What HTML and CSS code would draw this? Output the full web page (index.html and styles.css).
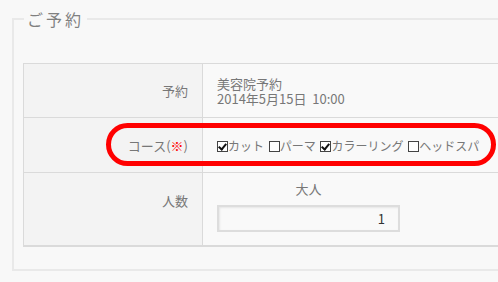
FILE: index.html
```html
<!DOCTYPE html>
<html lang="ja">
<head>
    <meta charset="UTF-8">
    <title>ご予約</title>
    <link rel="stylesheet" href="styles.css">
</head>
<body>
    <fieldset class="reserve">
        <legend>ご予約</legend>
        <div class="table-wrap">
            <table class="form-table">
                <colgroup>
                    <col class="col-label">
                    <col>
                </colgroup>
                <tr class="row-reserve">
                    <th>予約</th>
                    <td>
                        <div>美容院予約</div>
                        <div>2014年5月15日&nbsp;&nbsp;10:00</div>
                    </td>
                </tr>
                <tr class="row-course">
                    <th>コース(<span class="req">※</span>)</th>
                    <td>
                        <span class="opt"><span class="box checked"></span>カット</span>
                        <span class="opt"><span class="box"></span>パーマ</span>
                        <span class="opt"><span class="box checked"></span>カラーリング</span>
                        <span class="opt"><span class="box"></span>ヘッドスパ</span>
                    </td>
                </tr>
                <tr class="row-people">
                    <th>人数</th>
                    <td>
                        <div class="people">
                            <div class="people-label">大人</div>
                            <input type="text" class="people-input" value="1">
                        </div>
                    </td>
                </tr>
            </table>
            <div class="mark"></div>
        </div>
    </fieldset>
</body>
</html>
```

FILE: styles.css
```css
body {
    margin: 0;
    background-color: #f8f8f8;
    font-family: "Noto Sans CJK JP", "Noto Sans", sans-serif;
    color: #777;
}
.reserve {
    margin: 9px 0 0 12px;
    padding: 34px 0 22px 9px;
    border: 2px solid #e9e9e9;
    border-right: none;
}
.reserve legend {
    margin-left: 1px;
    padding: 0 3px;
    font-size: 16px;
    line-height: 20px;
    color: #808080;
    letter-spacing: 3px;
}
.table-wrap {
    position: relative;
}
.form-table {
    border-collapse: collapse;
    table-layout: fixed;
    width: 100%;
    font-size: 13px;
    line-height: 15px;
}
.col-label {
    width: 179px;
}
.form-table th,
.form-table td {
    border: 1px solid #dadada;
    padding: 0;
}
.form-table td {
    border-right: none;
}
.form-table tr:last-child th,
.form-table tr:last-child td {
    border-bottom-width: 2px;
}
.form-table th {
    padding-right: 14px;
    text-align: right;
    font-weight: normal;
    background-color: #f3f3f3;
    vertical-align: middle;
}
.form-table td {
    padding-left: 14px;
    background-color: #f9f9f9;
    vertical-align: middle;
}
.row-reserve {
    height: 54px;
}
.row-reserve td div {
    height: 15px;
}
.row-course {
    height: 55px;
}
.row-course td {
    font-size: 12px;
    white-space: nowrap;
}
.row-people {
    height: 73px;
}
.row-people th {
    vertical-align: top;
    padding-top: 20px;
    line-height: 16px;
}
.row-people td {
    vertical-align: top;
    padding-top: 8px;
}
.req {
    color: #f00;
}
.opt {
    margin-right: 2px;
}
.box {
    display: inline-block;
    box-sizing: border-box;
    width: 11px;
    height: 11px;
    border: 1px solid #444;
    background: #fff;
    vertical-align: -1px;
    position: relative;
}
.box.checked::after {
    content: "";
    position: absolute;
    left: 2px;
    top: 0;
    width: 3px;
    height: 6px;
    border: solid #111;
    border-width: 0 2px 2px 0;
    transform: rotate(40deg);
}
.people {
    width: 183px;
}
.people-label {
    text-align: center;
    line-height: 16px;
    margin-bottom: 8px;
}
.people-input {
    display: block;
    box-sizing: border-box;
    width: 183px;
    height: 27px;
    padding: 0 13px;
    border: 2px solid #ddd;
    background-color: #f9f9f9;
    box-shadow: inset 1px 1px 2px rgba(0, 0, 0, 0.08);
    font-family: inherit;
    font-size: 13px;
    color: #333;
    text-align: right;
}
.mark {
    position: absolute;
    left: 83px;
    top: 60px;
    width: 390px;
    height: 43px;
    box-sizing: border-box;
    border: 5px solid #f00;
    border-radius: 22px;
}
```
